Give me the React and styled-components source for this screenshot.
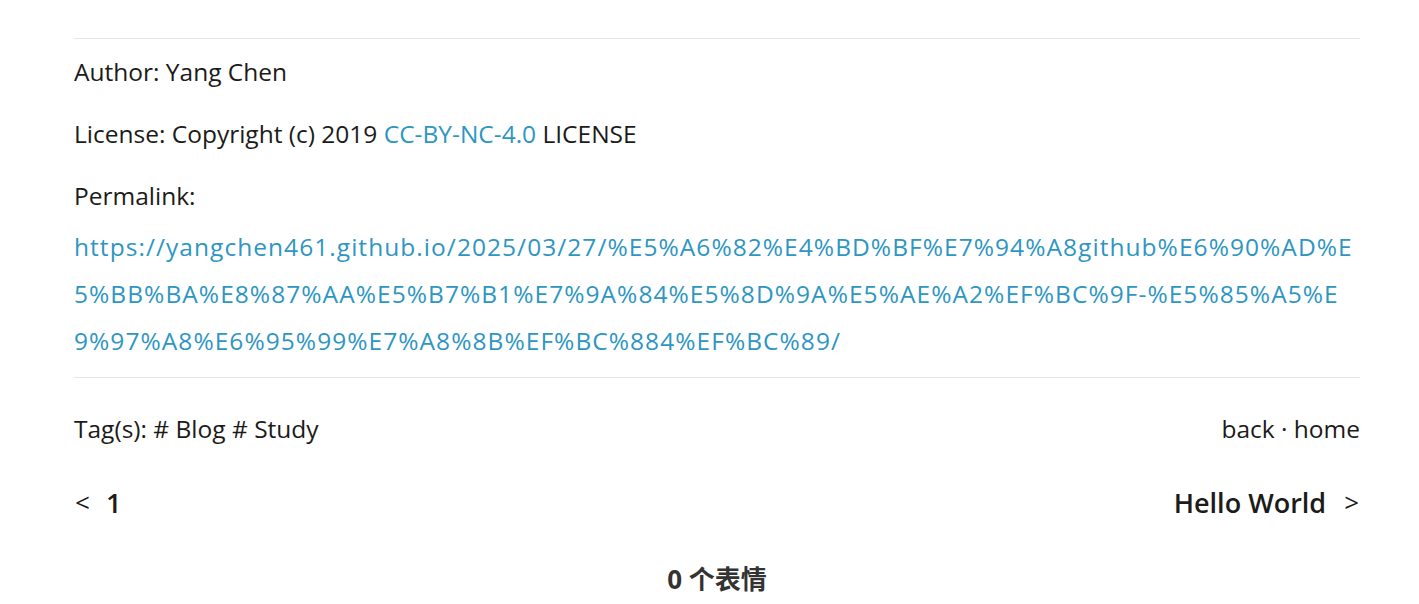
import React from "react";
import styled, { createGlobalStyle } from "styled-components";

const GlobalStyle = createGlobalStyle`
  html, body {
    margin: 0;
    padding: 0;
    background: #ffffff;
  }
  body {
    font-family: "Open Sans", "Noto Sans CJK SC", sans-serif;
    color: #1c1b19;
  }
`;

const Page = styled.div`
  width: 1286px;
  padding: 38px 0 0 74px;
`;

const Rule = styled.hr`
  border: none;
  border-top: 1px solid #e6e6e6;
  margin: 0;
`;

const Meta = styled.section`
  padding: 9px 0 13px;
`;

const Line = styled.p`
  margin: 0 0 ${({ $gap }) => $gap ?? 15}px;
  font-size: 24.5px;
  line-height: 47px;
`;

const Link = styled.a`
  color: #2e96c2;
  text-decoration: none;
`;

const Permalink = styled(Link)`
  display: block;
  width: 1280px;
  font-size: 24.5px;
  line-height: 47px;
  letter-spacing: 1.05px;
  word-break: break-all;
`;

const Row = styled.div`
  display: flex;
  justify-content: space-between;
  align-items: center;
  height: ${({ $h }) => $h}px;
`;

const Plain = styled.span`
  font-size: 24.5px;
`;

const NavLink = styled.span`
  display: flex;
  align-items: center;
  gap: ${({ $gap }) => $gap}px;
  font-size: 27px;
  font-weight: 600;
`;

const Arrow = styled.span`
  font-weight: 400;
  font-size: 26px;
  padding: 0 1px;
`;

const Reactions = styled.h3`
  margin: 0;
  text-align: center;
  font-size: 26px;
  font-weight: 700;
  color: #333;
  font-family: "Noto Sans", "Noto Sans CJK SC", sans-serif;
  line-height: 40px;
`;

const Spacer = styled.div`
  height: ${({ $h }) => $h}px;
`;

export default function App() {
  return (
    <>
      <GlobalStyle />
      <Page>
        <Rule />
        <Meta>
          <Line>Author: Yang Chen</Line>
          <Line>
            License: Copyright (c) 2019 <Link href="#">CC-BY-NC-4.0</Link> LICENSE
          </Line>
          <Line $gap={4}>Permalink:</Line>
          <Permalink href="#">
            https://yangchen461.github.io/2025/03/27/%E5%A6%82%E4%BD%BF%E7%94%A8github%E6%90%AD%E5%BB%BA%E8%87%AA%E5%B7%B1%E7%9A%84%E5%8D%9A%E5%AE%A2%EF%BC%9F-%E5%85%A5%E9%97%A8%E6%95%99%E7%A8%8B%EF%BC%884%EF%BC%89/
          </Permalink>
        </Meta>
        <Rule />
        <Row $h={100}>
          <Plain>Tag(s): # Blog # Study</Plain>
          <Plain>back · home</Plain>
        </Row>
        <Row $h={48}>
          <NavLink $gap={15}>
            <Arrow>&lt;</Arrow>1
          </NavLink>
          <NavLink $gap={17}>
            Hello World<Arrow>&gt;</Arrow>
          </NavLink>
        </Row>
        <Spacer $h={33} />
        <Reactions>0 个表情</Reactions>
      </Page>
    </>
  );
}
